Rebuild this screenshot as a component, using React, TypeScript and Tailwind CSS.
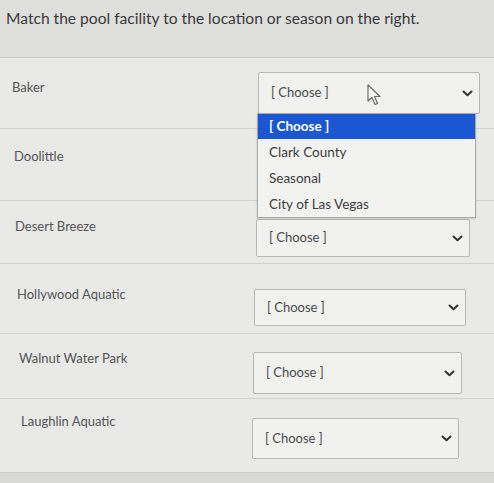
import React from 'react';

type Row = {
  label: string;
  rowClass: string;
  labelClass: string;
  selectClass: string;
  covered?: boolean;
};

const rows: Row[] = [
  { label: 'Baker', rowClass: 'h-[71px]', labelClass: 'pt-[20px] pl-[12px]', selectClass: 'mt-[14px] ml-[258px] w-[222px] h-[42px]' },
  { label: 'Doolittle', rowClass: 'h-[72px]', labelClass: 'pt-[18px] pl-[14px]', selectClass: 'mt-[18px] ml-[257px] w-[218px] h-[40px]', covered: true },
  { label: 'Desert Breeze', rowClass: 'h-[63px]', labelClass: 'pt-[16px] pl-[15px]', selectClass: 'mt-[18px] ml-[256px] w-[214px] h-[38px]' },
  { label: 'Hollywood Aquatic', rowClass: 'h-[70px]', labelClass: 'pt-[21px] pl-[17px]', selectClass: 'mt-[25px] ml-[254px] w-[212px] h-[37px]' },
  { label: 'Walnut Water Park', rowClass: 'h-[65px]', labelClass: 'pt-[15px] pl-[19px]', selectClass: 'mt-[18px] ml-[253px] w-[209px] h-[42px]' },
  { label: 'Laughlin Aquatic', rowClass: 'h-[74px]', labelClass: 'pt-[13px] pl-[21px]', selectClass: 'mt-[19px] ml-[252px] w-[207px] h-[41px]' },
];

const options = ['[ Choose ]', 'Clark County', 'Seasonal', 'City of Las Vegas'];

const Chevron = () => (
  <svg width="11" height="7" viewBox="0 0 11 7" className="text-[#333]">
    <path d="M1.5 1.5 L5.5 5.2 L9.5 1.5" fill="none" stroke="currentColor" strokeWidth="2" strokeLinecap="round" strokeLinejoin="round" />
  </svg>
);

const Cursor = () => (
  <svg width="16" height="23" viewBox="0 0 16 23" className="absolute left-[367px] top-[84px]">
    <path d="M1 1 L1 17 L5 13.5 L8 20.5 L10.5 19.5 L7.5 12.5 L13 12.5 Z" fill="#f7f7f6" stroke="#6b6b6b" strokeWidth="1.2" strokeLinejoin="round" />
  </svg>
);

const App: React.FC = () => {
  return (
    <div className="relative w-[494px] h-[483px] overflow-hidden bg-[#e6e6e4] font-['Lato','Liberation_Sans',sans-serif]">
      <div className="h-[57px] bg-[#dfdfdd] pt-[7px] pl-[6px]">
        <p className="text-[15.6px] text-[#3a3a3a]">
          Match the pool facility to the location or season on the right.
        </p>
      </div>

      <div className="border-t border-[#c9c9c7] bg-[#e9e9e7]">
        {rows.map((r) => (
          <div key={r.label} className={`relative flex border-b border-[#d0d0ce] ${r.rowClass}`}>
            <div className={`absolute left-0 top-0 text-[13px] text-[#555] ${r.labelClass}`}>{r.label}</div>
            {/* the Doolittle select sits under the open list */}
            {!r.covered && (
              <div
                className={`flex items-center justify-between border border-[#b8b8b6] rounded-[2px] bg-[#f1f1f0] pl-[12px] pr-[6px] ${r.selectClass}`}
              >
                <span className="text-[13px] text-[#4a4a4a]">[ Choose ]</span>
                <Chevron />
              </div>
            )}
          </div>
        ))}
      </div>

      <div className="h-[11px] bg-[#d9d9d7]" />

      {/* open list under the Baker select */}
      <div className="absolute left-[257px] top-[113px] w-[219px] border border-[#a9a9a7] bg-[#f2f2f1] shadow-[0_1px_2px_rgba(0,0,0,0.15)]">
        {options.map((o, i) => (
          <div
            key={o}
            className={
              i === 0
                ? 'h-[25px] flex items-center pl-[11px] bg-[#1b57d2] text-white text-[13.5px] font-bold'
                : 'h-[26px] flex items-center pl-[11px] text-[#3d3d3d] text-[13.5px]'
            }
          >
            {o}
          </div>
        ))}
      </div>

      <Cursor />
    </div>
  );
};

export default App;
